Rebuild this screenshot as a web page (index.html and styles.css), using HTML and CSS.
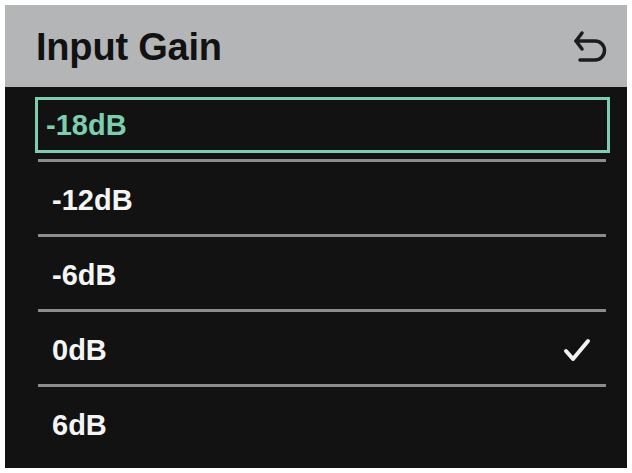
FILE: index.html
```html
<!DOCTYPE html>
<html lang="en">
<head>
  <meta charset="UTF-8">
  <meta name="viewport" content="width=device-width, initial-scale=1.0">
  <title>Input Gain</title>
  <link rel="stylesheet" href="styles.css">
</head>
<body>

  <div class="screen">
    <div class="header">
      <h1>Input Gain</h1>
      <svg class="back" width="34" height="32" viewBox="0 0 34 32">
        <path d="M9 3 L3 11 L9 19" />
        <path d="M3 11 H22 a9.5 9.5 0 0 1 0 19 H7" />
      </svg>
    </div>

    <ul class="list">
      <li class="item selected">-18dB</li>
      <li class="sep"></li>
      <li class="item">-12dB</li>
      <li class="sep"></li>
      <li class="item">-6dB</li>
      <li class="sep"></li>
      <li class="item">0dB
        <svg class="check" width="32" height="28" viewBox="0 0 32 28">
          <path d="M5 15 L12 23 L27 5" />
        </svg>
      </li>
      <li class="sep"></li>
      <li class="item">6dB</li>
    </ul>
  </div>

</body>
</html>
```

FILE: styles.css
```css
body {
  margin: 0;
  background-color: #ffffff;
  font-family: 'Liberation Sans', Arial, sans-serif;
}

.screen {
  margin: 5px 5px 0 5px;
  height: 463px;
  background-color: #121212;
  display: flex;
  flex-direction: column;
}

.header {
  height: 82px;
  background-color: #b4b5b7;
  display: flex;
  align-items: center;
  justify-content: space-between;
  padding: 0 20px 0 31px;
}

h1 {
  margin: 0;
  font-size: 38px;
  font-weight: bold;
  color: #121212;
  letter-spacing: -0.2px;
  padding-top: 3px;
}

.back path {
  fill: none;
  stroke: #1c1c1c;
  stroke-width: 3.5;
  stroke-linecap: round;
  stroke-linejoin: round;
}

.list {
  list-style: none;
  margin: 0;
  padding: 10px 17px 0 30px;
}

.item {
  height: 50px;
  border: 3px solid transparent;
  padding: 0 14px 0 14px;
  display: flex;
  align-items: center;
  justify-content: space-between;
  font-size: 29px;
  font-weight: bold;
  color: #f4f4f4;
}

.item.selected {
  border-color: #7ccfae;
  color: #7ccfae;
  padding-left: 8px;
}

.sep {
  height: 3px;
  margin: 6px 4px 10px 3px;
  background-color: #8c8c8c;
}

.check path {
  fill: none;
  stroke: #f2f2f2;
  stroke-width: 4;
  stroke-linecap: round;
  stroke-linejoin: round;
}
```
